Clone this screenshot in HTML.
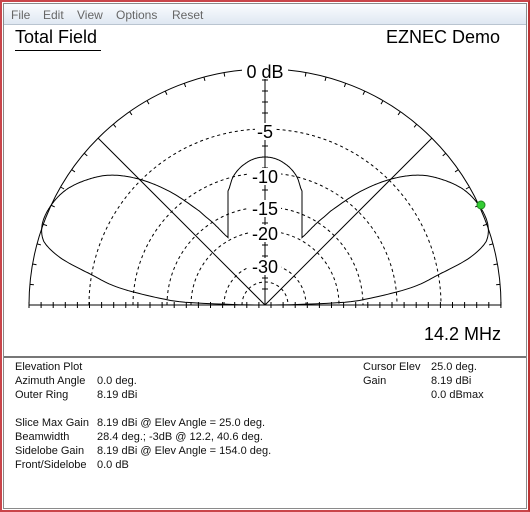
<!DOCTYPE html>
<html><head><style>
body{margin:0;width:530px;height:512px;overflow:hidden;background:#fff;font-family:"Liberation Sans",Arial,sans-serif;position:relative}
.frame{position:absolute;left:0;top:0;width:530px;height:512px;box-sizing:border-box;border:2px solid #c9454a;border-right-color:#b33;}
.win{position:absolute;left:3px;top:3px;width:524px;height:506px;box-sizing:border-box;border:1px solid #8a8a8a;background:#fff}
.menu{position:absolute;left:4px;top:4px;width:522px;height:20px;background:linear-gradient(#fafcfe,#dfe8f2);border-bottom:1px solid #b9c4d0;font-size:12px;color:#666}
.menu span{position:absolute;top:4px}
.t{position:absolute;white-space:nowrap}
.sep{position:absolute;left:4px;top:356px;width:522px;height:2px;background:#777}
.info{position:absolute;font-size:11px;color:#111}
</style></head><body>
<div class="frame"></div>
<div class="win"></div>
<div class="menu"><span style="left:7px">File</span><span style="left:39px">Edit</span><span style="left:73px">View</span><span style="left:112px">Options</span><span style="left:168px">Reset</span></div>
<div class="t" style="left:15px;top:27px;font-size:18px">Total Field</div>
<div style="position:absolute;left:15px;top:50px;width:86px;height:1px;background:#000"></div>
<div class="t" style="left:386px;top:27px;font-size:18px">EZNEC Demo</div>
<div class="t" style="left:424px;top:324px;font-size:18px">14.2 MHz</div>
<svg style="position:absolute;left:0;top:0" width="530" height="360">
<g fill="none" stroke="#000" stroke-width="1">
<path d="M29 305 A236 236 0 0 1 501 305 Z"/>
<g stroke-dasharray="3,3">
<path d="M89 305 A176 176 0 0 1 441 305"/>
<path d="M133 305 A132 132 0 0 1 397 305"/>
<path d="M167 305 A98 98 0 0 1 363 305"/>
<path d="M191 305 A74 74 0 0 1 339 305"/>
<path d="M224 305 A41 41 0 0 1 306 305"/>
<path d="M242 305 A23 23 0 0 1 288 305"/>
</g>
<path d="M265 305 L98 138 M265 305 L432 138 M265 305 V69"/>
<path id="ticks"/>
<path id="pat" stroke-width="1"/>
</g>
<g font-size="18" text-anchor="middle" font-family="Liberation Sans,Arial,sans-serif">
<rect x="242" y="61" width="46" height="18" fill="#fff"/><text x="265" y="78">0 dB</text>
<rect x="255" y="123" width="20" height="17" fill="#fff"/><text x="265" y="138">-5</text>
<rect x="249" y="168" width="32" height="17" fill="#fff"/><text x="265" y="183">-10</text>
<rect x="249" y="200" width="32" height="17" fill="#fff"/><text x="265" y="215">-15</text>
<rect x="249" y="225" width="32" height="17" fill="#fff"/><text x="265" y="240">-20</text>
<rect x="249" y="258" width="32" height="17" fill="#fff"/><text x="265" y="273">-30</text>
</g>
<circle cx="481" cy="205" r="4" fill="#3c3" stroke="#282"/>
</svg>
<div class="sep"></div>
<div class="info" style="left:15px;top:360px;line-height:14px">Elevation Plot<br>Azimuth Angle<br>Outer Ring<br><br>Slice Max Gain<br>Beamwidth<br>Sidelobe Gain<br>Front/Sidelobe</div>
<div class="info" style="left:97px;top:360px;line-height:14px"><br>0.0 deg.<br>8.19 dBi<br><br>8.19 dBi @ Elev Angle = 25.0 deg.<br>28.4 deg.; -3dB @ 12.2, 40.6 deg.<br>8.19 dBi @ Elev Angle = 154.0 deg.<br>0.0 dB</div>
<div class="info" style="left:363px;top:360px;line-height:14px">Cursor Elev<br>Gain</div>
<div class="info" style="left:431px;top:360px;line-height:14px">25.0 deg.<br>8.19 dBi<br>0.0 dBmax</div>
<script>
var cx=265,cy=305,R=236;
var A=[[0,0],[2,80],[4,110],[7,150],[10,177],[13,210],[16,230],[20,237],[25,236],[30,230],[35,218],[40,202],[45,178],[50,148],[55,115],[58,95],[61,78]];
var B=[[72,120],[76,132],[80,140],[85,146],[90,148],[95,146]];
function cr(P,a){for(var i=0;i<P.length-1;i++){if(a<=P[i+1][0]){var p0=P[Math.max(i-1,0)][1],p1=P[i][1],p2=P[i+1][1],p3=P[Math.min(i+2,P.length-1)][1];var t=(a-P[i][0])/(P[i+1][0]-P[i][0]);return 0.5*((2*p1)+(-p0+p2)*t+(2*p0-5*p1+4*p2-p3)*t*t+(-p0+3*p1-3*p2+p3)*t*t*t);}}return P[P.length-1][1];}
function rr(a){if(a>90)a=180-a;if(a<=61)return cr(A,a);if(a<=72)return 37/Math.cos(a*Math.PI/180);return cr(B,a);}
var d="";for(var a=0;a<=180;a+=0.25){var r=rr(a),t=a*Math.PI/180;d+=(a?"L":"M")+(cx+r*Math.cos(t)).toFixed(1)+" "+(cy-r*Math.sin(t)).toFixed(1);}
document.getElementById("pat").setAttribute("d",d);
var g="";
for(var a=5;a<180;a+=5){var t=a*Math.PI/180,c=Math.cos(t),s=Math.sin(t);if(a%45)g+="M"+(cx+R*c)+" "+(cy-R*s)+"L"+(cx+(R-4)*c)+" "+(cy-(R-4)*s);}
for(var x=29;x<=501;x+=12.1)g+="M"+x.toFixed(1)+" 302V308";
for(var y=80;y<300;y+=11)g+="M262 "+y+"H268";
document.getElementById("ticks").setAttribute("d",g);
</script>
</body></html>
